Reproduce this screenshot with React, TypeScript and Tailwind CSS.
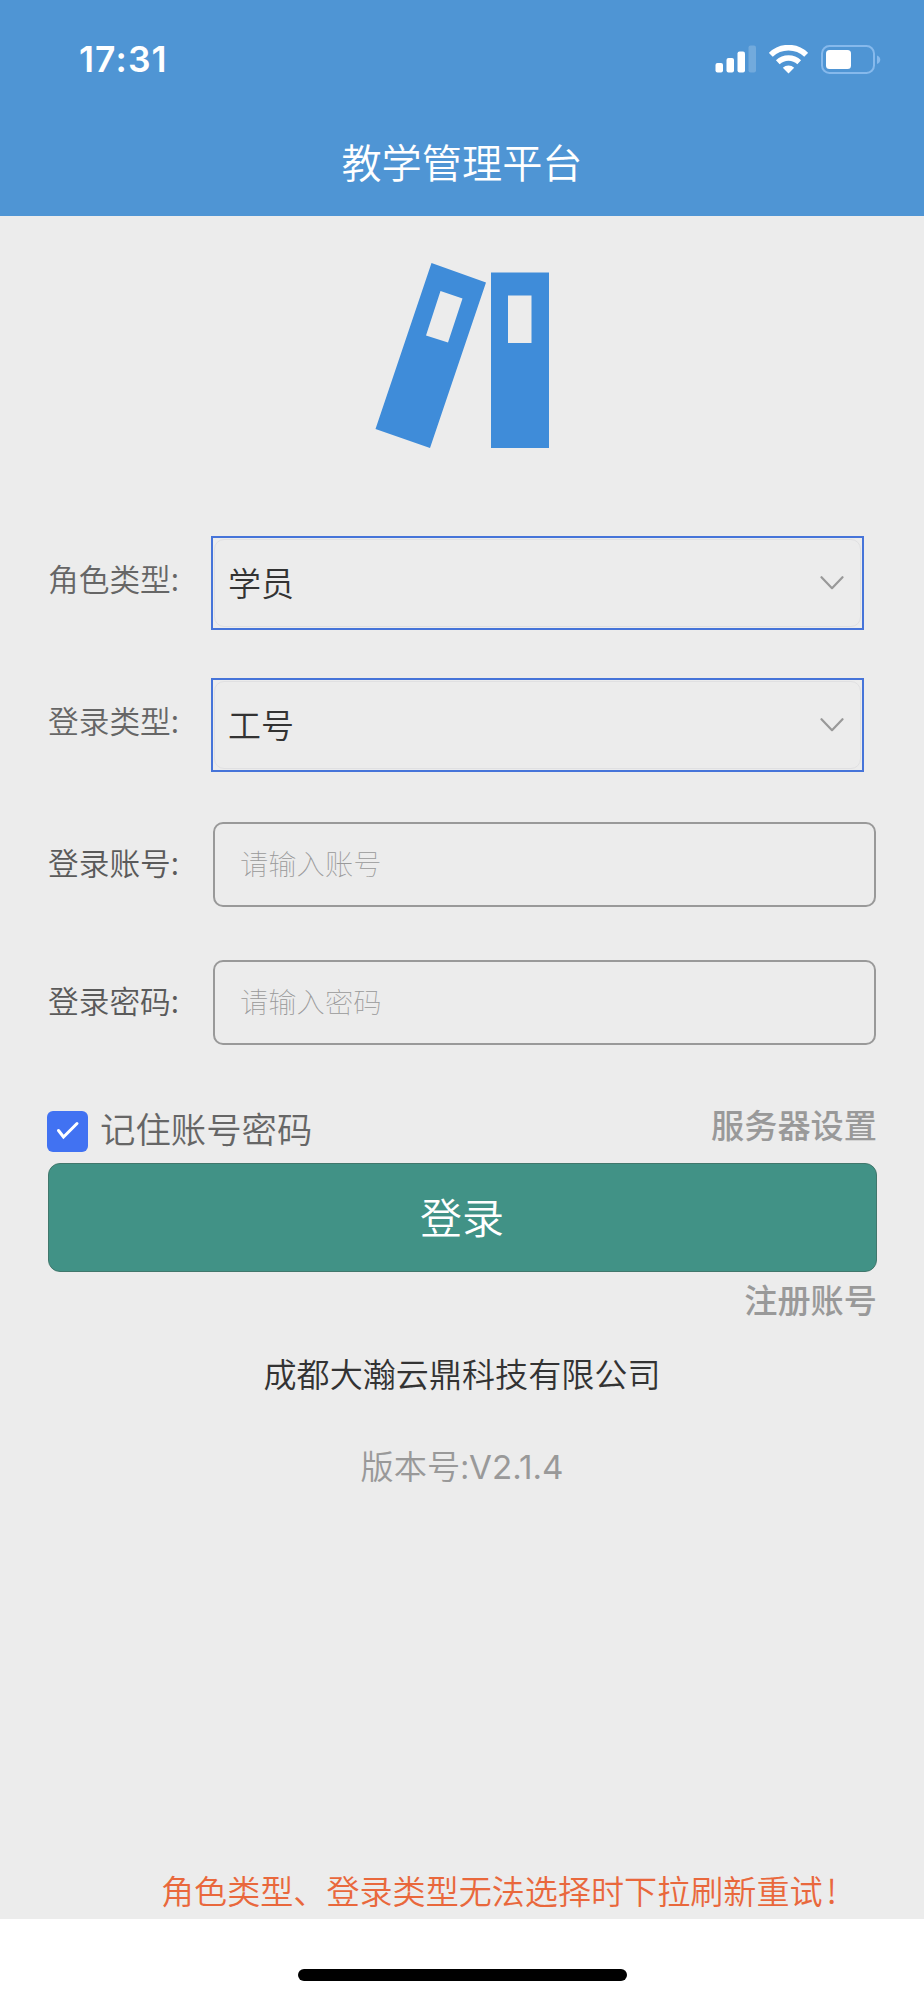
import { useState } from "react";

const SELECTS = [
  { label: "角色类型:", value: "学员" },
  { label: "登录类型:", value: "工号" },
];

function StatusBar() {
  return (
    <div className="flex h-[118px] items-center justify-between pl-[79px] pr-[43px]">
      <span className="pt-[2px] font-['Inter'] text-[35.5px] font-semibold leading-none tracking-[1.1px] text-white">
        17:31
      </span>
      <div className="flex items-center">
        <svg className="mr-[13px] h-[28px] w-[41px]" viewBox="0 0 41 28" fill="#fff">
          <rect x="0.5" y="18" width="7.5" height="9.5" rx="2" />
          <rect x="11.5" y="13" width="7.5" height="14.5" rx="2" />
          <rect x="22.5" y="6.5" width="7.5" height="21" rx="2" />
          <rect x="33.5" y="0.5" width="7.5" height="27" rx="2" opacity="0.2" />
        </svg>
        <svg className="mr-[13px] h-[29px] w-[39px]" viewBox="0 0 39 29" fill="none" stroke="#fff">
          <path d="M1.8 9.8a25.4 25.4 0 0 1 35.4 0" strokeWidth="5.6" />
          <path d="M8.8 17.2a15.6 15.6 0 0 1 21.4 0" strokeWidth="5.4" />
          <path d="M19.5 28.6l-5.7-5.9a8.4 8.4 0 0 1 11.4 0z" fill="#fff" stroke="none" />
        </svg>
        <svg className="h-[29px] w-[60px]" viewBox="0 0 60 29">
          <rect x="1" y="1" width="52" height="27" rx="7.5" fill="none" stroke="#86b9ec" strokeWidth="2" />
          <rect x="5" y="5" width="25" height="19" rx="3.5" fill="#fff" />
          <path d="M56 10.5c4.4 1.8 4.4 6.7 0 8.5z" fill="#86b9ec" />
        </svg>
      </div>
    </div>
  );
}

function Logo() {
  return (
    <svg className="mx-auto h-[186px] w-[174px]" viewBox="0 0 174 186" fill="#3f8cd9">
      <path fillRule="evenodd" d="M56.5 0L111 19.5 55 185 0.5 166zM65.5 28L51 72.5 73 79.5 87.5 35.5z" />
      <path fillRule="evenodd" d="M116 9.5h58v175.5h-58zM133 32.5v47.5h23.5v-47.5z" />
    </svg>
  );
}

function SelectRow({ label, value }: { label: string; value: string }) {
  return (
    <div className="flex items-start pl-[48px]">
      <span className="w-[163px] text-[30.7px] font-[350] leading-[83px] text-[#666]">{label}</span>
      <button className="h-[94px] w-[653px] border-2 border-[#4674d9] p-[1px] text-left">
        <span className="flex h-full items-center justify-between rounded-[10px] border border-[#e0e0e2] pl-[13px] pr-[16px]">
          <span className="pb-[3px] text-[33px] font-[350] leading-[82px] text-[#333]">{value}</span>
          <svg className="h-[14px] w-[24px]" viewBox="0 0 24 14" fill="none" stroke="#999" strokeWidth="2.2">
            <path d="M1.5 1.2l10.5 11 10.5-11" strokeLinecap="round" strokeLinejoin="round" />
          </svg>
        </span>
      </button>
    </div>
  );
}

type FieldProps = {
  label: string;
  type: string;
  placeholder: string;
};

function InputRow({ label, type, placeholder }: FieldProps) {
  return (
    <div className="flex items-start pl-[48px]">
      <span className="w-[165px] text-[30.7px] font-[350] leading-[80px] text-[#5a5a5a]">{label}</span>
      <input
        type={type}
        placeholder={placeholder}
        className="h-[85px] w-[663px] rounded-[10px] border-2 border-[#999] bg-transparent pb-[4px] pl-[25px] text-[28.3px] font-thin text-[#333] outline-none placeholder:text-[#999] placeholder:opacity-100"
      />
    </div>
  );
}

export default function App() {
  const [remember, setRemember] = useState(true);

  return (
    <div className="flex h-[2000px] w-[924px] flex-col overflow-hidden bg-white font-['Noto_Sans_CJK_SC',sans-serif]">
      <header className="h-[216px] bg-[#4f95d4]">
        <StatusBar />
        <h1 className="text-center text-[40.2px] font-[350] leading-[86px] text-white">教学管理平台</h1>
      </header>

      <main className="flex h-[1703px] flex-col bg-[#ececec]">
        <div className="pt-[47px]">
          <Logo />
        </div>

        <div className="mt-[87px] flex flex-col gap-[48px]">
          {SELECTS.map((s) => (
            <SelectRow key={s.label} label={s.label} value={s.value} />
          ))}
        </div>

        <div className="mt-[50px] flex flex-col gap-[53px]">
          <InputRow label="登录账号:" type="text" placeholder="请输入账号" />
          <InputRow label="登录密码:" type="password" placeholder="请输入密码" />
        </div>

        <div className="mt-[58px] flex h-[60px] items-start justify-between pl-[47px] pr-[47px]">
          <button className="flex items-start" onClick={() => setRemember(!remember)}>
            <span className="mt-[8px] flex size-[41px] items-center justify-center rounded-[6px] bg-[#4172f2]">
              {remember && (
                <svg className="size-[41px]" viewBox="0 0 41 41" fill="none" stroke="#fff" strokeWidth="3">
                  <path d="M11.5 19.5l5 6.5L30 12.5" strokeLinecap="round" />
                </svg>
              )}
            </span>
            <span className="ml-[12px] text-[35.4px] font-[350] leading-[50px] text-[#666]">记住账号密码</span>
          </button>
          <a className="text-[33.2px] font-medium leading-[42px] text-[#999]">服务器设置</a>
        </div>

        <button className="mx-auto h-[109px] w-[829px] shrink-0 rounded-[12px] border border-[#41776c] bg-[#419286] pb-[4px] text-[42px] font-[350] leading-[100px] text-white">
          登录
        </button>

        <div className="flex justify-end pr-[47px]">
          <a className="text-[33.2px] font-medium leading-[54px] text-[#999]">注册账号</a>
        </div>

        <p className="mt-[22px] text-center text-[33.1px] font-[350] leading-[50px] text-[#333]">
          成都大瀚云鼎科技有限公司
        </p>
        <p className="mt-[42px] text-center text-[33.2px] font-[350] leading-[50px] text-[#999]">
          版本号:<span className="font-['Inter'] font-normal">V2.1.4</span>
        </p>

        <p className="mt-auto pl-[161px] text-[33.1px] font-[350] leading-[58px] text-[#e9683c]">
          角色类型、登录类型无法选择时下拉刷新重试<span className="ml-[4px]">!</span>
        </p>
      </main>

      <footer className="flex h-[81px] justify-center pt-[50px]">
        <div className="h-[12px] w-[329px] rounded-full bg-black" />
      </footer>
    </div>
  );
}
